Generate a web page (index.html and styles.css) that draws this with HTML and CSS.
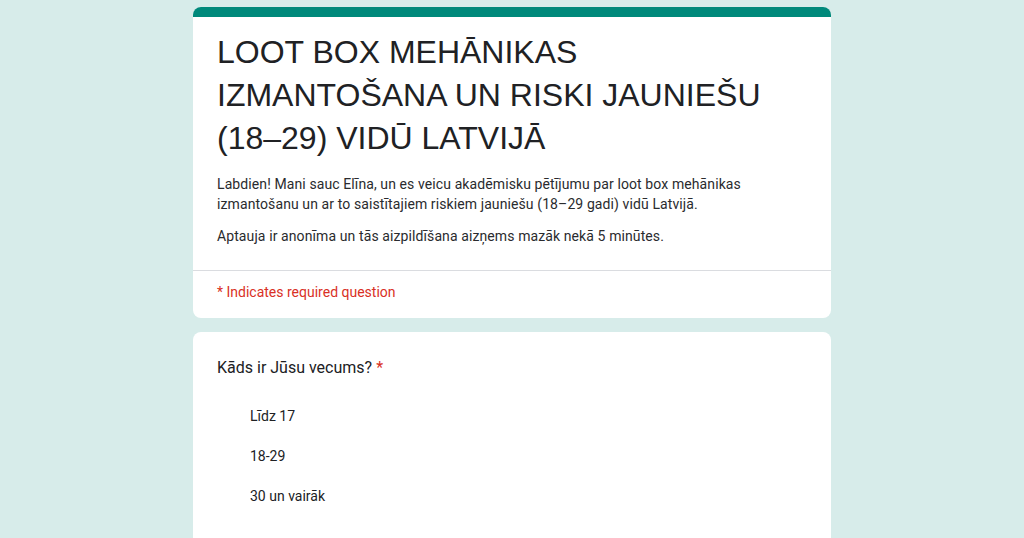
FILE: index.html
```html
<!DOCTYPE html>
<html lang="lv">
<head>
<meta charset="utf-8">
<link rel="stylesheet" href="styles.css">
</head>
<body>
<div class="page">
  <div class="card header-card">
    <div class="accent"></div>
    <div class="header-body">
      <h1 class="title">LOOT BOX MEHĀNIKAS IZMANTOŠANA UN RISKI JAUNIEŠU (18–29) VIDŪ LATVIJĀ</h1>
      <p class="desc">Labdien! Mani sauc Elīna, un es veicu akadēmisku pētījumu par loot box mehānikas izmantošanu un ar to saistītajiem riskiem jauniešu (18–29 gadi) vidū Latvijā.</p>
      <p class="desc">Aptauja ir anonīma un tās aizpildīšana aizņems mazāk nekā 5 minūtes.</p>
    </div>
    <div class="required-note">* Indicates required question</div>
  </div>
  <div class="card question-card">
    <div class="question">Kāds ir Jūsu vecums? <span class="star">*</span></div>
    <div class="options">
      <div class="option">Līdz 17</div>
      <div class="option">18-29</div>
      <div class="option">30 un vairāk</div>
    </div>
  </div>
</div>
</body>
</html>
```

FILE: styles.css
```css
html, body {
  margin: 0;
  padding: 0;
  background: #d7ecea;
}
body {
  font-family: Roboto, "Liberation Sans", Arial, sans-serif;
  color: #202124;
}
.page {
  width: 638px;
  margin: 0 auto;
  padding-top: 7px;
  display: flex;
  flex-direction: column;
  gap: 14px;
}
.card {
  background: #fff;
  border-radius: 8px;
  overflow: hidden;
}
.accent {
  height: 10px;
  background: #00897b;
}
.header-body {
  padding: 14px 24px 12px 24px;
  border-bottom: 1px solid #dadce0;
}
.title {
  margin: 0 0 14px 0;
  font-family: "Liberation Sans", Arial, sans-serif;
  font-weight: 400;
  font-size: 32px;
  line-height: 43px;
  color: #202124;
}
.desc {
  margin: 0 0 12px 0;
  font-size: 14px;
  line-height: 20px;
  letter-spacing: 0.1px;
  color: #2a2b2e;
}
.required-note {
  padding: 12px 24px 17px 24px;
  font-size: 14px;
  line-height: 18px;
  color: #d93025;
}
.question-card {
  padding: 24px 24px 24px 24px;
  min-height: 220px;
}
.question {
  font-size: 16px;
  line-height: 24px;
  color: #202124;
}
.star {
  color: #d93025;
}
.options {
  padding: 26px 0 0 33px;
  display: flex;
  flex-direction: column;
  gap: 20px;
}
.option {
  font-size: 14px;
  line-height: 20px;
}
```
